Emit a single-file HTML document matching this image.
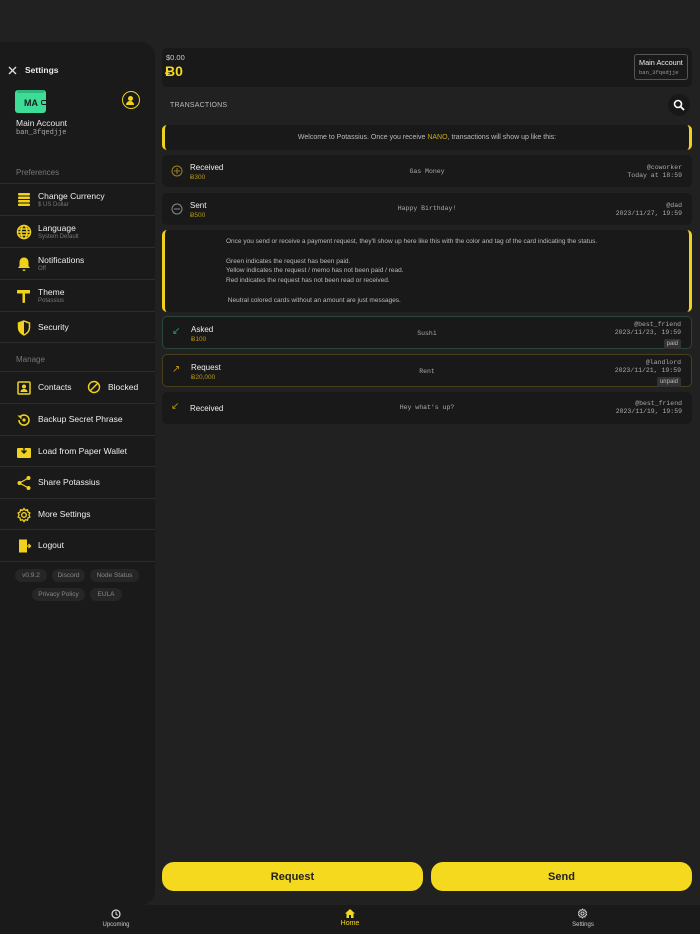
<!DOCTYPE html>
<html><head><meta charset="utf-8"><style>
*{box-sizing:border-box;margin:0;padding:0}
body{width:700px;height:934px;background:#212121;font-family:"Liberation Sans",sans-serif;color:#e8e8e8;position:relative;overflow:hidden}
.abs{position:absolute}
.drawer{left:0;top:42px;width:155px;height:863px;background:#1a1a1a;border-radius:0 14px 14px 0}
.mono{font-family:"Liberation Mono",monospace}
.row{position:absolute;left:0;width:155px;border-top:1px solid #2c2c2c;height:32px}
.row .ic{position:absolute;left:16px;top:8px;width:16px;height:16px}
.row .t{position:absolute;left:38px;font-size:8.5px;color:#eee}
.row .s{position:absolute;left:38px;font-size:6px;color:#777}
.card{position:absolute;left:162px;width:530px;background:#191919;border-radius:5px}
.yb{border-left:3px solid #f0d21e;border-right:3px solid #f0d21e}
.chip{position:absolute;height:13px;border-radius:7px;background:#262626;color:#888;font-size:6.5px;line-height:13px;text-align:center}
.tx .n{position:absolute;left:28px;font-size:8px;color:#eee}
.tx .a{position:absolute;left:28px;font-size:6.5px;color:#b89a14}
.tx .m{position:absolute;left:0;right:0;text-align:center;font-size:6.5px;color:#aaa}
.tx .r{position:absolute;right:10px;text-align:right;font-size:6.5px;color:#aaa;line-height:8px}
.tag{display:inline-block;background:#333;color:#bbb;border-radius:2px;padding:1px 3px;font-family:"Liberation Sans",sans-serif;font-size:6px;margin-top:2px}
.btn{position:absolute;top:862px;height:29px;background:#f5d91f;border-radius:12px;color:#222;font-weight:bold;font-size:11px;line-height:30px;text-align:center}
</style></head><body>
<div class="abs" style="left:0;top:905px;width:700px;height:29px;background:#1a1a1a"></div>
<div class="abs drawer"></div>
<svg class="abs" style="left:8px;top:66px" width="9" height="9" viewBox="0 0 9 9"><path d="M1 1L8 8M8 1L1 8" stroke="#ddd" stroke-width="1.4"/></svg>
<div class="abs" style="left:25px;top:65px;font-size:8.5px;font-weight:bold">Settings</div>
<div class="abs" style="left:15px;top:90px;width:31px;height:23px;background:#3ddc97;border-radius:3px;color:#1a1a1a;font-size:9px;font-weight:bold;line-height:26px;padding-left:9px">MA</div>
<div class="abs" style="left:17px;top:90px;width:27px;height:3px;background:#2fb67d;border-radius:2px"></div>
<div class="abs" style="left:41px;top:100px;width:6px;height:5px;border:1.5px solid #1a1a1a;border-right:none;border-radius:2px 0 0 2px"></div>
<div class="abs" style="left:122px;top:91px;width:18px;height:18px;border:1.5px solid #f0d21e;border-radius:50%"></div>
<div class="abs" style="left:128px;top:96px;width:5px;height:5px;background:#f0d21e;border-radius:50%"></div>
<div class="abs" style="left:126px;top:101px;width:8px;height:4px;background:#f0d21e;border-radius:4px 4px 0 0"></div>
<div class="abs" style="left:16px;top:118px;font-size:8.5px">Main Account</div>
<div class="abs mono" style="left:16px;top:129px;font-size:7px;color:#aaa">ban_3fqedjje</div>
<div class="abs" style="left:16px;top:168px;font-size:8px;color:#777">Preferences</div>
<div class="row" style="top:183px"><svg class="ic" viewBox="0 0 16 16"><g fill="#f0d21e"><rect x="2" y="1" width="12" height="2.5" rx="1"/><rect x="2" y="4.5" width="12" height="2.5" rx="1"/><rect x="2" y="8" width="12" height="2.5" rx="1"/><rect x="2" y="11.5" width="12" height="2.5" rx="1"/></g></svg><div class="t" style="top:7px">Change Currency</div><div class="s" style="top:18px">$ US Dollar</div></div>
<div class="row" style="top:215px"><svg class="ic" viewBox="0 0 16 16"><g fill="none" stroke="#f0d21e" stroke-width="1.5"><circle cx="8" cy="8" r="6.5"/><ellipse cx="8" cy="8" rx="3" ry="6.5"/><path d="M1.5 8h13M2.5 5h11M2.5 11h11"/></g></svg><div class="t" style="top:7px">Language</div><div class="s" style="top:18px">System Default</div></div>
<div class="row" style="top:247px"><svg class="ic" viewBox="0 0 16 16"><path d="M8 1.5c-3 0-4.5 2.3-4.5 5v3.5L2 12h12l-1.5-2V6.5c0-2.7-1.5-5-4.5-5zM6.5 13.5h3a1.5 1.5 0 0 1-3 0z" fill="#f0d21e"/></svg><div class="t" style="top:7px">Notifications</div><div class="s" style="top:18px">Off</div></div>
<div class="row" style="top:279px"><svg class="ic" viewBox="0 0 16 16"><g fill="#f0d21e"><rect x="1" y="2" width="13" height="3.5" rx="0.5"/><rect x="6.5" y="5" width="2.5" height="10" rx="1"/></g></svg><div class="t" style="top:7px">Theme</div><div class="s" style="top:18px">Potassius</div></div>
<div class="row" style="top:311px"><svg class="ic" viewBox="0 0 16 16"><path d="M8 1L2.5 3v4.5C2.5 11 5 13.5 8 15c3-1.5 5.5-4 5.5-7.5V3z" fill="none" stroke="#f0d21e" stroke-width="1.5"/><path d="M8 1L2.5 3v4.5C2.5 11 5 13.5 8 15z" fill="#f0d21e"/></svg><div class="t" style="top:10px">Security</div></div>
<div class="abs" style="font-size:8px;color:#777;border-top:1px solid #2c2c2c;width:155px;left:0;padding-left:16px;top:342px;padding-top:12px;height:30px">Manage</div>
<div class="row" style="top:371px"><svg class="ic" viewBox="0 0 16 16"><rect x="2" y="2" width="12" height="12" rx="1" fill="none" stroke="#f0d21e" stroke-width="1.5"/><circle cx="8" cy="6.5" r="2" fill="#f0d21e"/><path d="M4.5 12c0-2 1.5-3 3.5-3s3.5 1 3.5 3z" fill="#f0d21e"/></svg><div class="t" style="top:10px">Contacts</div>
<svg class="abs" style="left:87px;top:8px" width="14" height="14" viewBox="0 0 14 14"><circle cx="7" cy="7" r="5.5" fill="none" stroke="#f0d21e" stroke-width="1.4"/><path d="M3 11L11 3" stroke="#f0d21e" stroke-width="1.4"/></svg><div class="t" style="top:10px;left:108px">Blocked</div></div>
<div class="row" style="top:403px"><svg class="ic" viewBox="0 0 16 16"><path d="M3 8a5 5 0 1 0 1.5-3.5" fill="none" stroke="#f0d21e" stroke-width="1.6"/><path d="M1.5 3.5h4v4z" fill="#f0d21e"/><circle cx="8" cy="8" r="1.6" fill="#f0d21e"/></svg><div class="t" style="top:10px">Backup Secret Phrase</div></div>
<div class="row" style="top:435px"><svg class="ic" viewBox="0 0 16 16"><rect x="1" y="4" width="14" height="10" rx="1" fill="#f0d21e"/><path d="M8 2v7M5.5 6.5L8 9l2.5-2.5" stroke="#1a1a1a" stroke-width="1.4" fill="none"/></svg><div class="t" style="top:10px">Load from Paper Wallet</div></div>
<div class="row" style="top:466px"><svg class="ic" viewBox="0 0 16 16"><g fill="#f0d21e"><circle cx="12.5" cy="3" r="2"/><circle cx="3.5" cy="8" r="2"/><circle cx="12.5" cy="13" r="2"/></g><path d="M12.5 3L3.5 8l9 5" stroke="#f0d21e" stroke-width="1.2" fill="none"/></svg><div class="t" style="top:10px">Share Potassius</div></div>
<div class="row" style="top:498px"><svg class="ic" viewBox="0 0 16 16"><circle cx="8" cy="8" r="2.3" fill="none" stroke="#f0d21e" stroke-width="1.4"/><path d="M8 1.5l1.3 1.8 2.2-.5.4 2.2 2 1-1 2 1 2-2 1-.4 2.2-2.2-.5L8 14.5l-1.3-1.8-2.2.5-.4-2.2-2-1 1-2-1-2 2-1 .4-2.2 2.2.5z" fill="none" stroke="#f0d21e" stroke-width="1.3"/></svg><div class="t" style="top:10px">More Settings</div></div>
<div class="row" style="top:529px"><svg class="ic" viewBox="0 0 16 16"><rect x="3" y="1.5" width="8" height="13" fill="#f0d21e"/><path d="M11 8h3.5M12.5 6l2 2-2 2" stroke="#f0d21e" stroke-width="1.3" fill="none"/></svg><div class="t" style="top:10px">Logout</div></div>
<div class="row" style="top:561px;height:1px"></div>
<div class="chip" style="left:15px;top:569px;width:32px">v0.9.2</div>
<div class="chip" style="left:52px;top:569px;width:33px">Discord</div>
<div class="chip" style="left:90px;top:569px;width:49px">Node Status</div>
<div class="chip" style="left:32px;top:588px;width:53px">Privacy Policy</div>
<div class="chip" style="left:90px;top:588px;width:32px">EULA</div>

<div class="card" style="top:48px;height:39px"></div>
<div class="abs" style="left:166px;top:53px;font-size:7.5px;color:#ccc">$0.00</div>
<div class="abs" style="left:165px;top:63px;font-size:14px;font-weight:bold;color:#f5d91f">Ƀ0</div>
<div class="abs" style="left:634px;top:54px;width:54px;height:26px;border:1px solid #555;border-radius:3px;padding:3px 4px">
<div style="font-size:7.3px;color:#eee">Main Account</div><div class="mono" style="font-size:5.5px;color:#999;margin-top:2px">ban_3fqedjje</div></div>
<div class="abs" style="left:170px;top:102px;font-size:7px;color:#bbb;letter-spacing:0.2px">TRANSACTIONS</div>
<div class="abs" style="left:668px;top:94px;width:22px;height:22px;background:#181818;border-radius:50%"></div>
<svg class="abs" style="left:673px;top:99px" width="12" height="12" viewBox="0 0 12 12"><circle cx="5" cy="5" r="3.5" fill="none" stroke="#fff" stroke-width="1.6"/><path d="M7.5 7.5L11 11" stroke="#fff" stroke-width="1.8"/></svg>
<div class="card yb" style="top:125px;height:25px;font-size:7px;color:#bbb;text-align:center;line-height:25px">Welcome to Potassius. Once you receive <span style="color:#c9aa16">NANO</span>, transactions will show up like this:</div>
<div class="card tx" style="top:155px;height:32px"><svg class="abs" style="left:9px;top:10px" width="12" height="12" viewBox="0 0 12 12"><circle cx="6" cy="6" r="5" fill="none" stroke="#9c8416" stroke-width="1"/><path d="M6 3v6M3 6h6" stroke="#9c8416"/></svg><div class="n" style="top:8px">Received</div><div class="a" style="top:19px">Ƀ300</div><div class="m mono" style="top:13px">Gas Money</div><div class="r mono" style="top:9px">@coworker<br>Today at 18:59</div></div>
<div class="card tx" style="top:193px;height:32px"><svg class="abs" style="left:9px;top:10px" width="12" height="12" viewBox="0 0 12 12"><circle cx="6" cy="6" r="5" fill="none" stroke="#888" stroke-width="1"/><path d="M3 6h6" stroke="#888"/></svg><div class="n" style="top:8px">Sent</div><div class="a" style="top:19px">Ƀ500</div><div class="m mono" style="top:12px">Happy Birthday!</div><div class="r mono" style="top:9px">@dad<br>2023/11/27, 19:59</div></div>
<div class="card yb" style="top:230px;height:82px;font-size:6.5px;color:#bbb;padding:7px 0 0 61px;line-height:9.8px">Once you send or receive a payment request, they'll show up here like this with the color and tag of the card indicating the status.<br><br>Green indicates the request has been paid.<br>Yellow indicates the request / memo has not been paid / read.<br>Red indicates the request has not been read or received.<br><br>&nbsp;Neutral colored cards without an amount are just messages.</div>
<div class="card tx" style="top:316px;height:33px;border:1px solid #27473a"><div class="abs" style="left:9px;top:9px;color:#3a9a6a;font-size:10px">↙</div><div class="n" style="top:8px">Asked</div><div class="a" style="top:19px">Ƀ100</div><div class="m mono" style="top:13px">Sushi</div><div class="r mono" style="top:4px">@best_friend<br>2023/11/23, 19:59<br><span class="tag">paid</span></div></div>
<div class="card tx" style="top:354px;height:33px;border:1px solid #4a3f1c"><div class="abs" style="left:9px;top:9px;color:#c9921a;font-size:10px">↗</div><div class="n" style="top:8px">Request</div><div class="a" style="top:19px">Ƀ20,000</div><div class="m mono" style="top:13px">Rent</div><div class="r mono" style="top:4px">@landlord<br>2023/11/21, 19:59<br><span class="tag">unpaid</span></div></div>
<div class="card tx" style="top:392px;height:32px"><div class="abs" style="left:9px;top:9px;color:#b89a14;font-size:10px">↙</div><div class="n" style="top:12px">Received</div><div class="m mono" style="top:12px">Hey what's up?</div><div class="r mono" style="top:8px">@best_friend<br>2023/11/19, 19:59</div></div>
<div class="btn" style="left:162px;width:261px">Request</div>
<div class="btn" style="left:431px;width:261px">Send</div>
<svg class="abs" style="left:111px;top:909px" width="10" height="10" viewBox="0 0 10 10"><circle cx="5" cy="5" r="4" fill="none" stroke="#ddd" stroke-width="1.2"/><path d="M5 2.5V5l1.5 1.2" stroke="#ddd" fill="none"/></svg>
<div class="abs" style="left:96px;top:922px;width:40px;text-align:center;font-size:6px;color:#ccc">Upcoming</div>
<svg class="abs" style="left:345px;top:909px" width="10" height="9" viewBox="0 0 10 9"><path d="M5 0L0 4.5h1.5V9h2.5V6h2v3h2.5V4.5H10z" fill="#f5d91f"/></svg>
<div class="abs" style="left:330px;top:920px;width:40px;text-align:center;font-size:7px;color:#f5d91f">Home</div>
<svg class="abs" style="left:577px;top:908px" width="11" height="11" viewBox="0 0 16 16"><circle cx="8" cy="8" r="2.3" fill="none" stroke="#ddd" stroke-width="1.4"/><path d="M8 1.5l1.3 1.8 2.2-.5.4 2.2 2 1-1 2 1 2-2 1-.4 2.2-2.2-.5L8 14.5l-1.3-1.8-2.2.5-.4-2.2-2-1 1-2-1-2 2-1 .4-2.2 2.2.5z" fill="none" stroke="#ddd" stroke-width="1.3"/></svg>
<div class="abs" style="left:563px;top:922px;width:40px;text-align:center;font-size:6px;color:#ccc">Settings</div>
</body></html>
